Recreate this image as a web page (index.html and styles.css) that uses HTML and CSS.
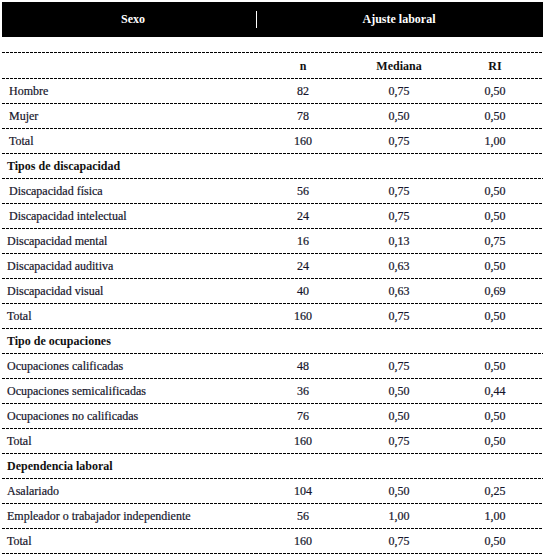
FILE: index.html
```html
<!DOCTYPE html>
<html lang="es">
<head>
<meta charset="utf-8">
<title>Ajuste laboral</title>
<link rel="stylesheet" href="styles.css">
</head>
<body>
<table class="tbl">
  <colgroup>
    <col class="c-label"><col class="c-num"><col class="c-num"><col class="c-num">
  </colgroup>
  <thead>
    <tr class="top">
      <th class="sexo">Sexo</th>
      <th class="ajuste" colspan="3">Ajuste laboral</th>
    </tr>
    <tr class="spacer"><td colspan="4"></td></tr>
    <tr class="colhead">
      <th></th><th>n</th><th>Mediana</th><th>RI</th>
    </tr>
  </thead>
  <tbody>
    <tr><td class="lbl ind">Hombre</td><td>82</td><td>0,75</td><td>0,50</td></tr>
    <tr><td class="lbl ind">Mujer</td><td>78</td><td>0,50</td><td>0,50</td></tr>
    <tr><td class="lbl ind">Total</td><td>160</td><td>0,75</td><td>1,00</td></tr>
    <tr class="section"><td class="lbl" colspan="4">Tipos de discapacidad</td></tr>
    <tr><td class="lbl ind">Discapacidad física</td><td>56</td><td>0,75</td><td>0,50</td></tr>
    <tr><td class="lbl ind">Discapacidad intelectual</td><td>24</td><td>0,75</td><td>0,50</td></tr>
    <tr><td class="lbl">Discapacidad mental</td><td>16</td><td>0,13</td><td>0,75</td></tr>
    <tr><td class="lbl">Discapacidad auditiva</td><td>24</td><td>0,63</td><td>0,50</td></tr>
    <tr><td class="lbl">Discapacidad visual</td><td>40</td><td>0,63</td><td>0,69</td></tr>
    <tr><td class="lbl">Total</td><td>160</td><td>0,75</td><td>0,50</td></tr>
    <tr class="section"><td class="lbl" colspan="4">Tipo de ocupaciones</td></tr>
    <tr><td class="lbl">Ocupaciones calificadas</td><td>48</td><td>0,75</td><td>0,50</td></tr>
    <tr><td class="lbl">Ocupaciones semicalificadas</td><td>36</td><td>0,50</td><td>0,44</td></tr>
    <tr><td class="lbl">Ocupaciones no calificadas</td><td>76</td><td>0,50</td><td>0,50</td></tr>
    <tr><td class="lbl">Total</td><td>160</td><td>0,75</td><td>0,50</td></tr>
    <tr class="section"><td class="lbl" colspan="4">Dependencia laboral</td></tr>
    <tr><td class="lbl">Asalariado</td><td>104</td><td>0,50</td><td>0,25</td></tr>
    <tr><td class="lbl">Empleador o trabajador independiente</td><td>56</td><td>1,00</td><td>1,00</td></tr>
    <tr><td class="lbl">Total</td><td>160</td><td>0,75</td><td>0,50</td></tr>
  </tbody>
</table>
</body>
</html>
```
FILE: styles.css
```css
html, body {
  margin: 0;
  padding: 0;
  background: #fff;
}
body {
  padding: 2px 0 0 2px;
  font-family: "Liberation Serif", "Times New Roman", serif;
  font-size: 12px;
  color: #15152b;
}
.tbl {
  width: 541px;
  border-collapse: collapse;
  border-spacing: 0;
  table-layout: fixed;
}
.c-label { width: 253px; }
.c-num { width: 96px; }

.tbl th, .tbl td {
  padding: 0;
  text-align: center;
  vertical-align: middle;
  background: repeating-linear-gradient(90deg, #000 0 3px, transparent 3px 4px) left bottom / 100% 1px no-repeat;
}

.top th {
  height: 35px;
  background: #000;
  color: #fff;
  font-weight: bold;
  font-size: 12px;
}
.top .sexo {
  padding-left: 9px;
}
.top .ajuste {
  background: linear-gradient(#fff, #fff) no-repeat 1px center / 1px 17px, #000;
}

.spacer td {
  height: 15px;
  background: none;
}
.colhead th {
  height: 26px;
  padding-top: 1px;
  font-weight: bold;
  color: #111;
  background: repeating-linear-gradient(90deg, #000 0 3px, transparent 3px 4px) left bottom / 100% 1px no-repeat,
              repeating-linear-gradient(90deg, #000 0 3px, transparent 3px 4px) left top / 100% 1px no-repeat;
}

tbody td {
  height: 25px;
  padding-top: 1px;
  -webkit-text-stroke: 0.2px currentColor;
}
tbody td.lbl {
  text-align: left;
  padding-left: 5px;
}
tbody td.lbl.ind {
  padding-left: 7px;
}
.section td {
  font-weight: bold;
  color: #111;
  -webkit-text-stroke: 0;
}
```
